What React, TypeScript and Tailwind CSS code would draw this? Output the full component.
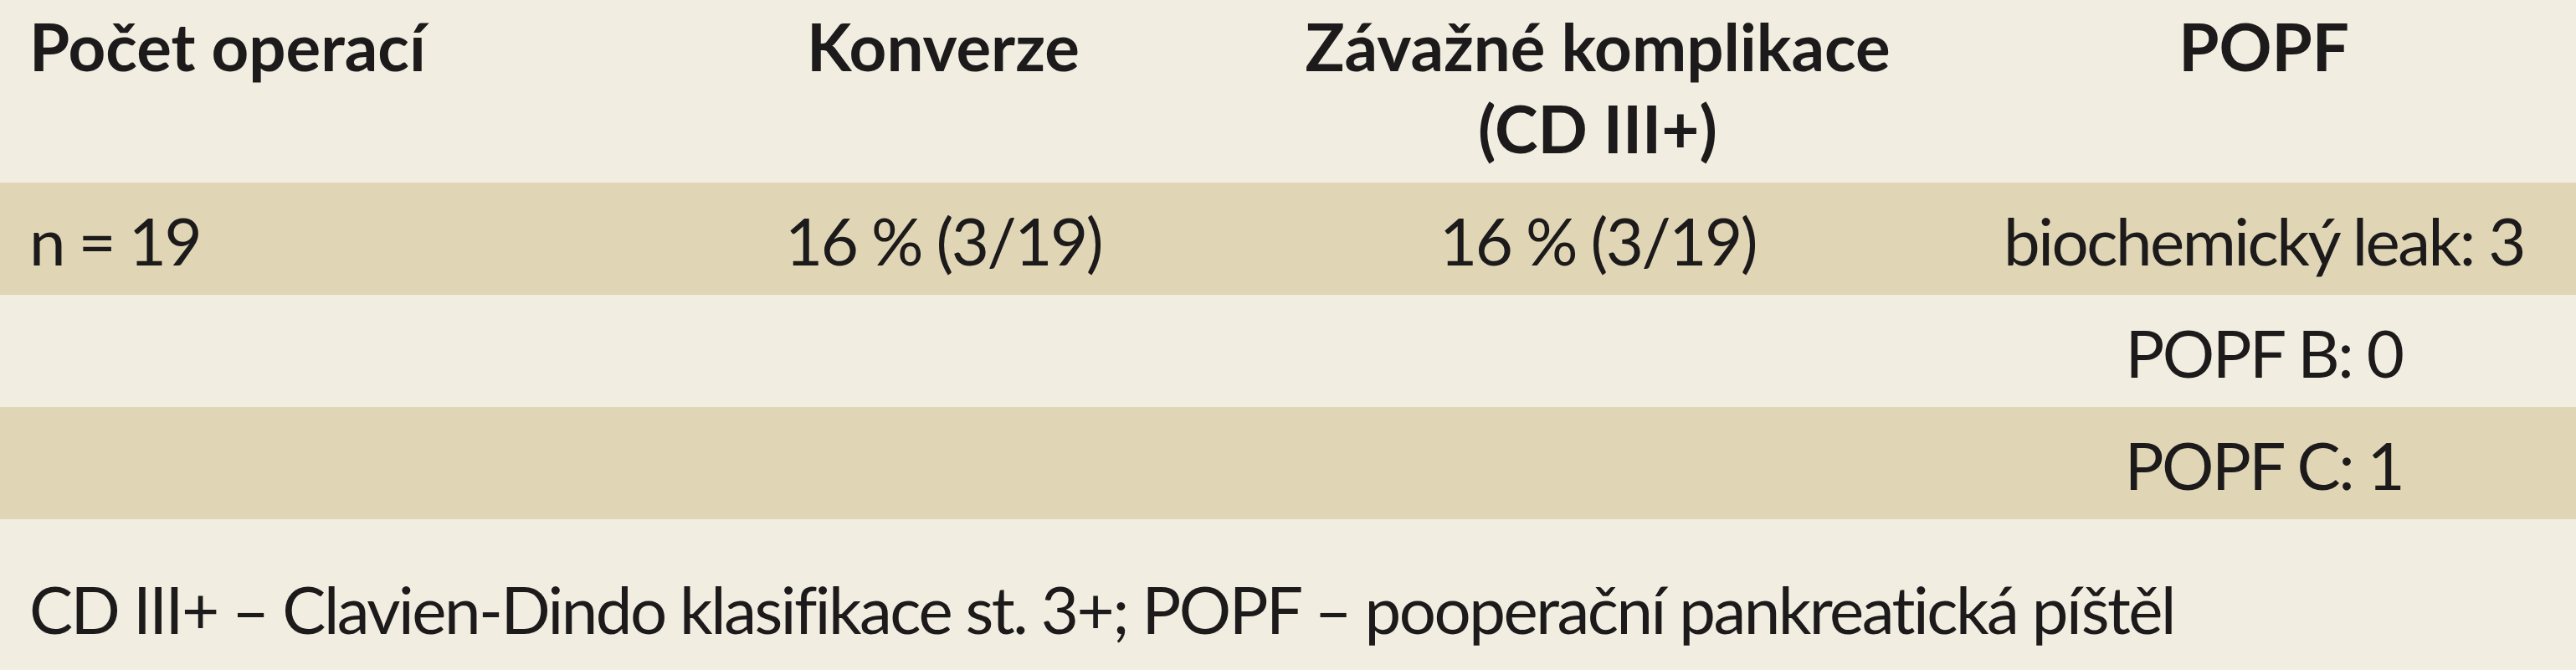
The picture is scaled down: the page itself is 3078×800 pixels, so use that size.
const rows = [
  { cells: ["n = 19", "16 % (3/19)", "16 % (3/19)", "biochemický leak: 3"], dark: true },
  { cells: ["", "", "", "POPF B: 0"], dark: false },
  { cells: ["", "", "", "POPF C: 1"], dark: true },
];

const grid = "grid grid-cols-[742px_770px_794px_1fr]";

export default function App() {
  return (
    <div className="w-[3078px] h-[800px] bg-[#f1ede0] text-[#1c1a1a] font-['Lato',sans-serif] text-[78px] leading-[98px]">
      {/* header */}
      <div className={`${grid} h-[218px] pt-[6px] font-bold`}>
        <div className="pl-[35px]">Počet operací</div>
        <div className="text-center">Konverze</div>
        <div className="text-center">
          Závažné komplikace
          <br />
          (CD III+)
        </div>
        <div className="pl-[26px] text-center">POPF</div>
      </div>

      {/* body */}
      {rows.map((row, i) => (
        <div
          key={i}
          className={`${grid} h-[134px] pt-[20px] tracking-[-2.5px] ${row.dark ? "bg-[#e0d6b6]" : "bg-[#f1ede0]"}`}
        >
          <div className="pl-[35px]">{row.cells[0]}</div>
          <div className="text-center">{row.cells[1]}</div>
          <div className="text-center">{row.cells[2]}</div>
          <div className="pl-[26px] text-center">{row.cells[3]}</div>
        </div>
      ))}

      {/* legend */}
      <div className="pl-[35px] pt-[58px] tracking-[-2.5px]">
        CD III+ – Clavien-Dindo klasifikace st. 3+; POPF – pooperační pankreatická píštěl
      </div>
    </div>
  );
}
